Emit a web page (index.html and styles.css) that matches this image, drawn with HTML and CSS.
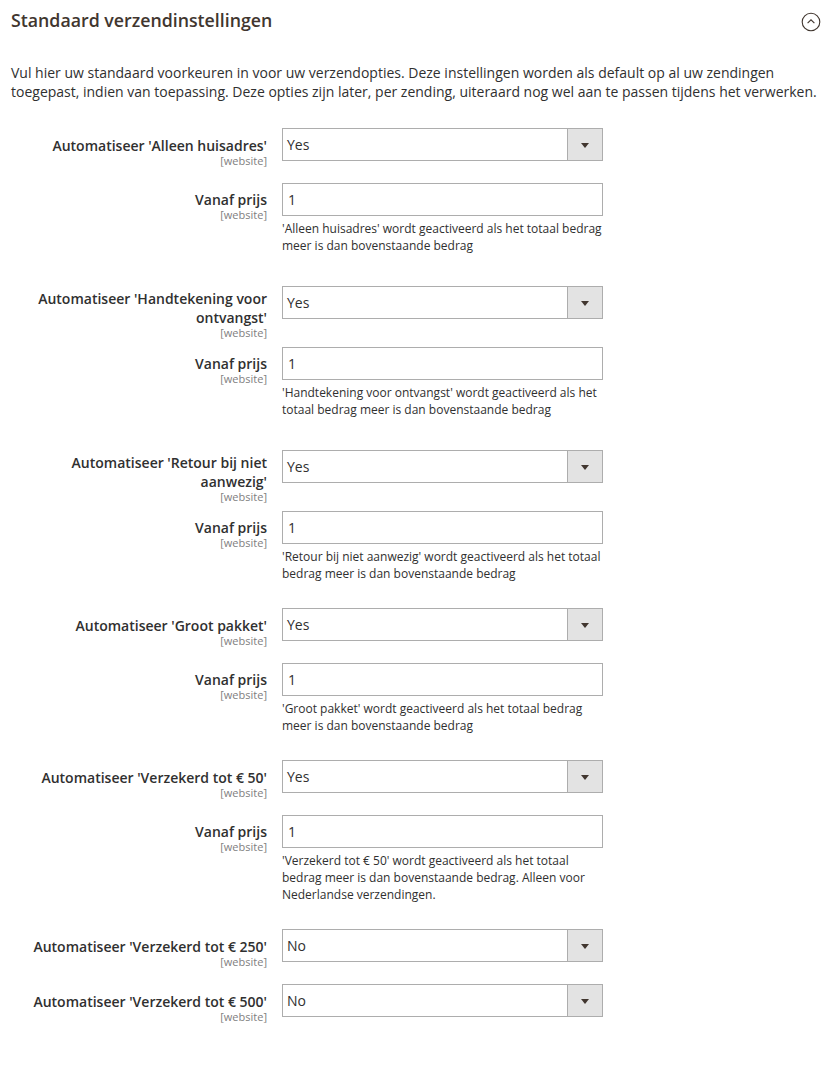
FILE: index.html
```html
<!DOCTYPE html>
<html lang="nl">
<head>
<meta charset="utf-8">
<title>Standaard verzendinstellingen</title>
<link rel="stylesheet" href="styles.css">
</head>
<body>
<section class="section">
  <header class="section-head">
    <h2 class="section-title">Standaard verzendinstellingen</h2>
    <svg class="collapse-icon" width="20" height="20" viewBox="0 0 20 20" aria-hidden="true">
      <circle cx="10" cy="10" r="8.8" fill="none" stroke="#41362f" stroke-width="1.1"/>
      <polyline points="6.6,11.2 10,7.8 13.4,11.2" fill="none" stroke="#41362f" stroke-width="1.1"/>
    </svg>
  </header>
  <p class="section-desc">Vul hier uw standaard voorkeuren in voor uw verzendopties. Deze instellingen worden als default op al uw zendingen toegepast, indien van toepassing. Deze opties zijn later, per zending, uiteraard nog wel aan te passen tijdens het verwerken.</p>

  <div class="fields">
    <div class="field field-select">
      <div class="label"><span class="label-text">Automatiseer 'Alleen huisadres'</span><span class="scope">[website]</span></div>
      <div class="control"><div class="select"><span class="select-value">Yes</span><span class="select-btn"><span class="caret"></span></span></div></div>
    </div>
    <div class="field field-input">
      <div class="label"><span class="label-text">Vanaf prijs</span><span class="scope">[website]</span></div>
      <div class="control"><input class="text-input" type="text" value="1"><p class="note">'Alleen huisadres' wordt geactiveerd als het totaal bedrag meer is dan bovenstaande bedrag</p></div>
    </div>

    <div class="field field-select field-tall">
      <div class="label"><span class="label-text">Automatiseer 'Handtekening voor ontvangst'</span><span class="scope">[website]</span></div>
      <div class="control"><div class="select"><span class="select-value">Yes</span><span class="select-btn"><span class="caret"></span></span></div></div>
    </div>
    <div class="field field-input">
      <div class="label"><span class="label-text">Vanaf prijs</span><span class="scope">[website]</span></div>
      <div class="control"><input class="text-input" type="text" value="1"><p class="note">'Handtekening voor ontvangst' wordt geactiveerd als het totaal bedrag meer is dan bovenstaande bedrag</p></div>
    </div>

    <div class="field field-select field-tall">
      <div class="label"><span class="label-text">Automatiseer 'Retour bij niet aanwezig'</span><span class="scope">[website]</span></div>
      <div class="control"><div class="select"><span class="select-value">Yes</span><span class="select-btn"><span class="caret"></span></span></div></div>
    </div>
    <div class="field field-input">
      <div class="label"><span class="label-text">Vanaf prijs</span><span class="scope">[website]</span></div>
      <div class="control"><input class="text-input" type="text" value="1"><p class="note">'Retour bij niet aanwezig' wordt geactiveerd als het totaal bedrag meer is dan bovenstaande bedrag</p></div>
    </div>

    <div class="field field-select">
      <div class="label"><span class="label-text">Automatiseer 'Groot pakket'</span><span class="scope">[website]</span></div>
      <div class="control"><div class="select"><span class="select-value">Yes</span><span class="select-btn"><span class="caret"></span></span></div></div>
    </div>
    <div class="field field-input">
      <div class="label"><span class="label-text">Vanaf prijs</span><span class="scope">[website]</span></div>
      <div class="control"><input class="text-input" type="text" value="1"><p class="note">'Groot pakket' wordt geactiveerd als het totaal bedrag meer is dan bovenstaande bedrag</p></div>
    </div>

    <div class="field field-select">
      <div class="label"><span class="label-text">Automatiseer 'Verzekerd tot € 50'</span><span class="scope">[website]</span></div>
      <div class="control"><div class="select"><span class="select-value">Yes</span><span class="select-btn"><span class="caret"></span></span></div></div>
    </div>
    <div class="field field-input">
      <div class="label"><span class="label-text">Vanaf prijs</span><span class="scope">[website]</span></div>
      <div class="control"><input class="text-input" type="text" value="1"><p class="note">'Verzekerd tot € 50' wordt geactiveerd als het totaal bedrag meer is dan bovenstaande bedrag. Alleen voor Nederlandse verzendingen.</p></div>
    </div>

    <div class="field field-select">
      <div class="label"><span class="label-text">Automatiseer 'Verzekerd tot € 250'</span><span class="scope">[website]</span></div>
      <div class="control"><div class="select"><span class="select-value">No</span><span class="select-btn"><span class="caret"></span></span></div></div>
    </div>
    <div class="field field-select">
      <div class="label"><span class="label-text">Automatiseer 'Verzekerd tot € 500'</span><span class="scope">[website]</span></div>
      <div class="control"><div class="select"><span class="select-value">No</span><span class="select-btn"><span class="caret"></span></span></div></div>
    </div>
  </div>
</section>
</body>
</html>
```

FILE: styles.css
```css
html, body {
  margin: 0;
  padding: 0;
  background: #ffffff;
}
body {
  font-family: "Open Sans", "Noto Sans", "Liberation Sans", sans-serif;
  color: #303030;
  font-size: 14px;
}
.section {
  padding: 0 0 40px 0;
}
.section-head {
  display: flex;
  justify-content: space-between;
  align-items: flex-start;
  padding: 10px 14px 0 11px;
}
.section-title {
  margin: 0;
  font-size: 17.75px;
  line-height: 20px;
  font-weight: 600;
  color: #41362f;
}
.collapse-icon {
  display: block;
  margin-top: 2px;
}
.section-desc {
  margin: 31px 8px 0 11px;
  font-size: 14px;
  line-height: 19px;
  color: #303030;
}
.fields {
  margin-top: 27px;
  display: flex;
  flex-direction: column;
}
.field {
  display: grid;
  grid-template-columns: 267px 321px;
  column-gap: 15px;
  align-items: start;
}
.label {
  box-sizing: border-box;
  padding-left: 20px;
  text-align: right;
  font-weight: 600;
  font-size: 14px;
  color: #303030;
}
.label-text {
  display: block;
  line-height: 19px;
}
.scope {
  display: block;
  font-size: 11px;
  line-height: 11px;
  font-weight: 400;
  color: #808080;
}
.field-select .label { padding-top: 8px; }
.field-tall .label { padding-top: 3px; }
.field-input .label { padding-top: 7px; }

.field-input { margin-top: 17px; }
.field-tall + .field-input { margin-top: 9px; }
.field-input + .field-select { margin-top: 26px; }
.field-input + .field-select.field-tall { margin-top: 32px; }
.field-select + .field-select { margin-top: 17px; }

.control {
  display: flex;
  flex-direction: column;
}
.select {
  box-sizing: border-box;
  height: 33px;
  border: 1px solid #adadad;
  background: #ffffff;
  display: flex;
}
.select-value {
  flex: 1;
  padding-left: 4px;
  line-height: 31px;
  font-size: 14px;
  color: #303030;
}
.select-btn {
  width: 34px;
  border-left: 1px solid #adadad;
  background: #e3e3e3;
  display: flex;
  align-items: center;
  justify-content: center;
}
.caret {
  width: 0;
  height: 0;
  border-left: 4px solid transparent;
  border-right: 4px solid transparent;
  border-top: 5px solid #41362f;
  margin-top: 1px;
}
.text-input {
  box-sizing: border-box;
  width: 321px;
  height: 33px;
  margin: 0;
  border: 1px solid #adadad;
  border-radius: 0;
  padding: 0 5px;
  font-family: "Open Sans", "Noto Sans", "Liberation Sans", sans-serif;
  font-size: 14px;
  color: #303030;
  background: #ffffff;
  outline: none;
}
.note {
  margin: 4px 0 0 0;
  font-size: 12px;
  line-height: 17px;
  color: #303030;
}
```
